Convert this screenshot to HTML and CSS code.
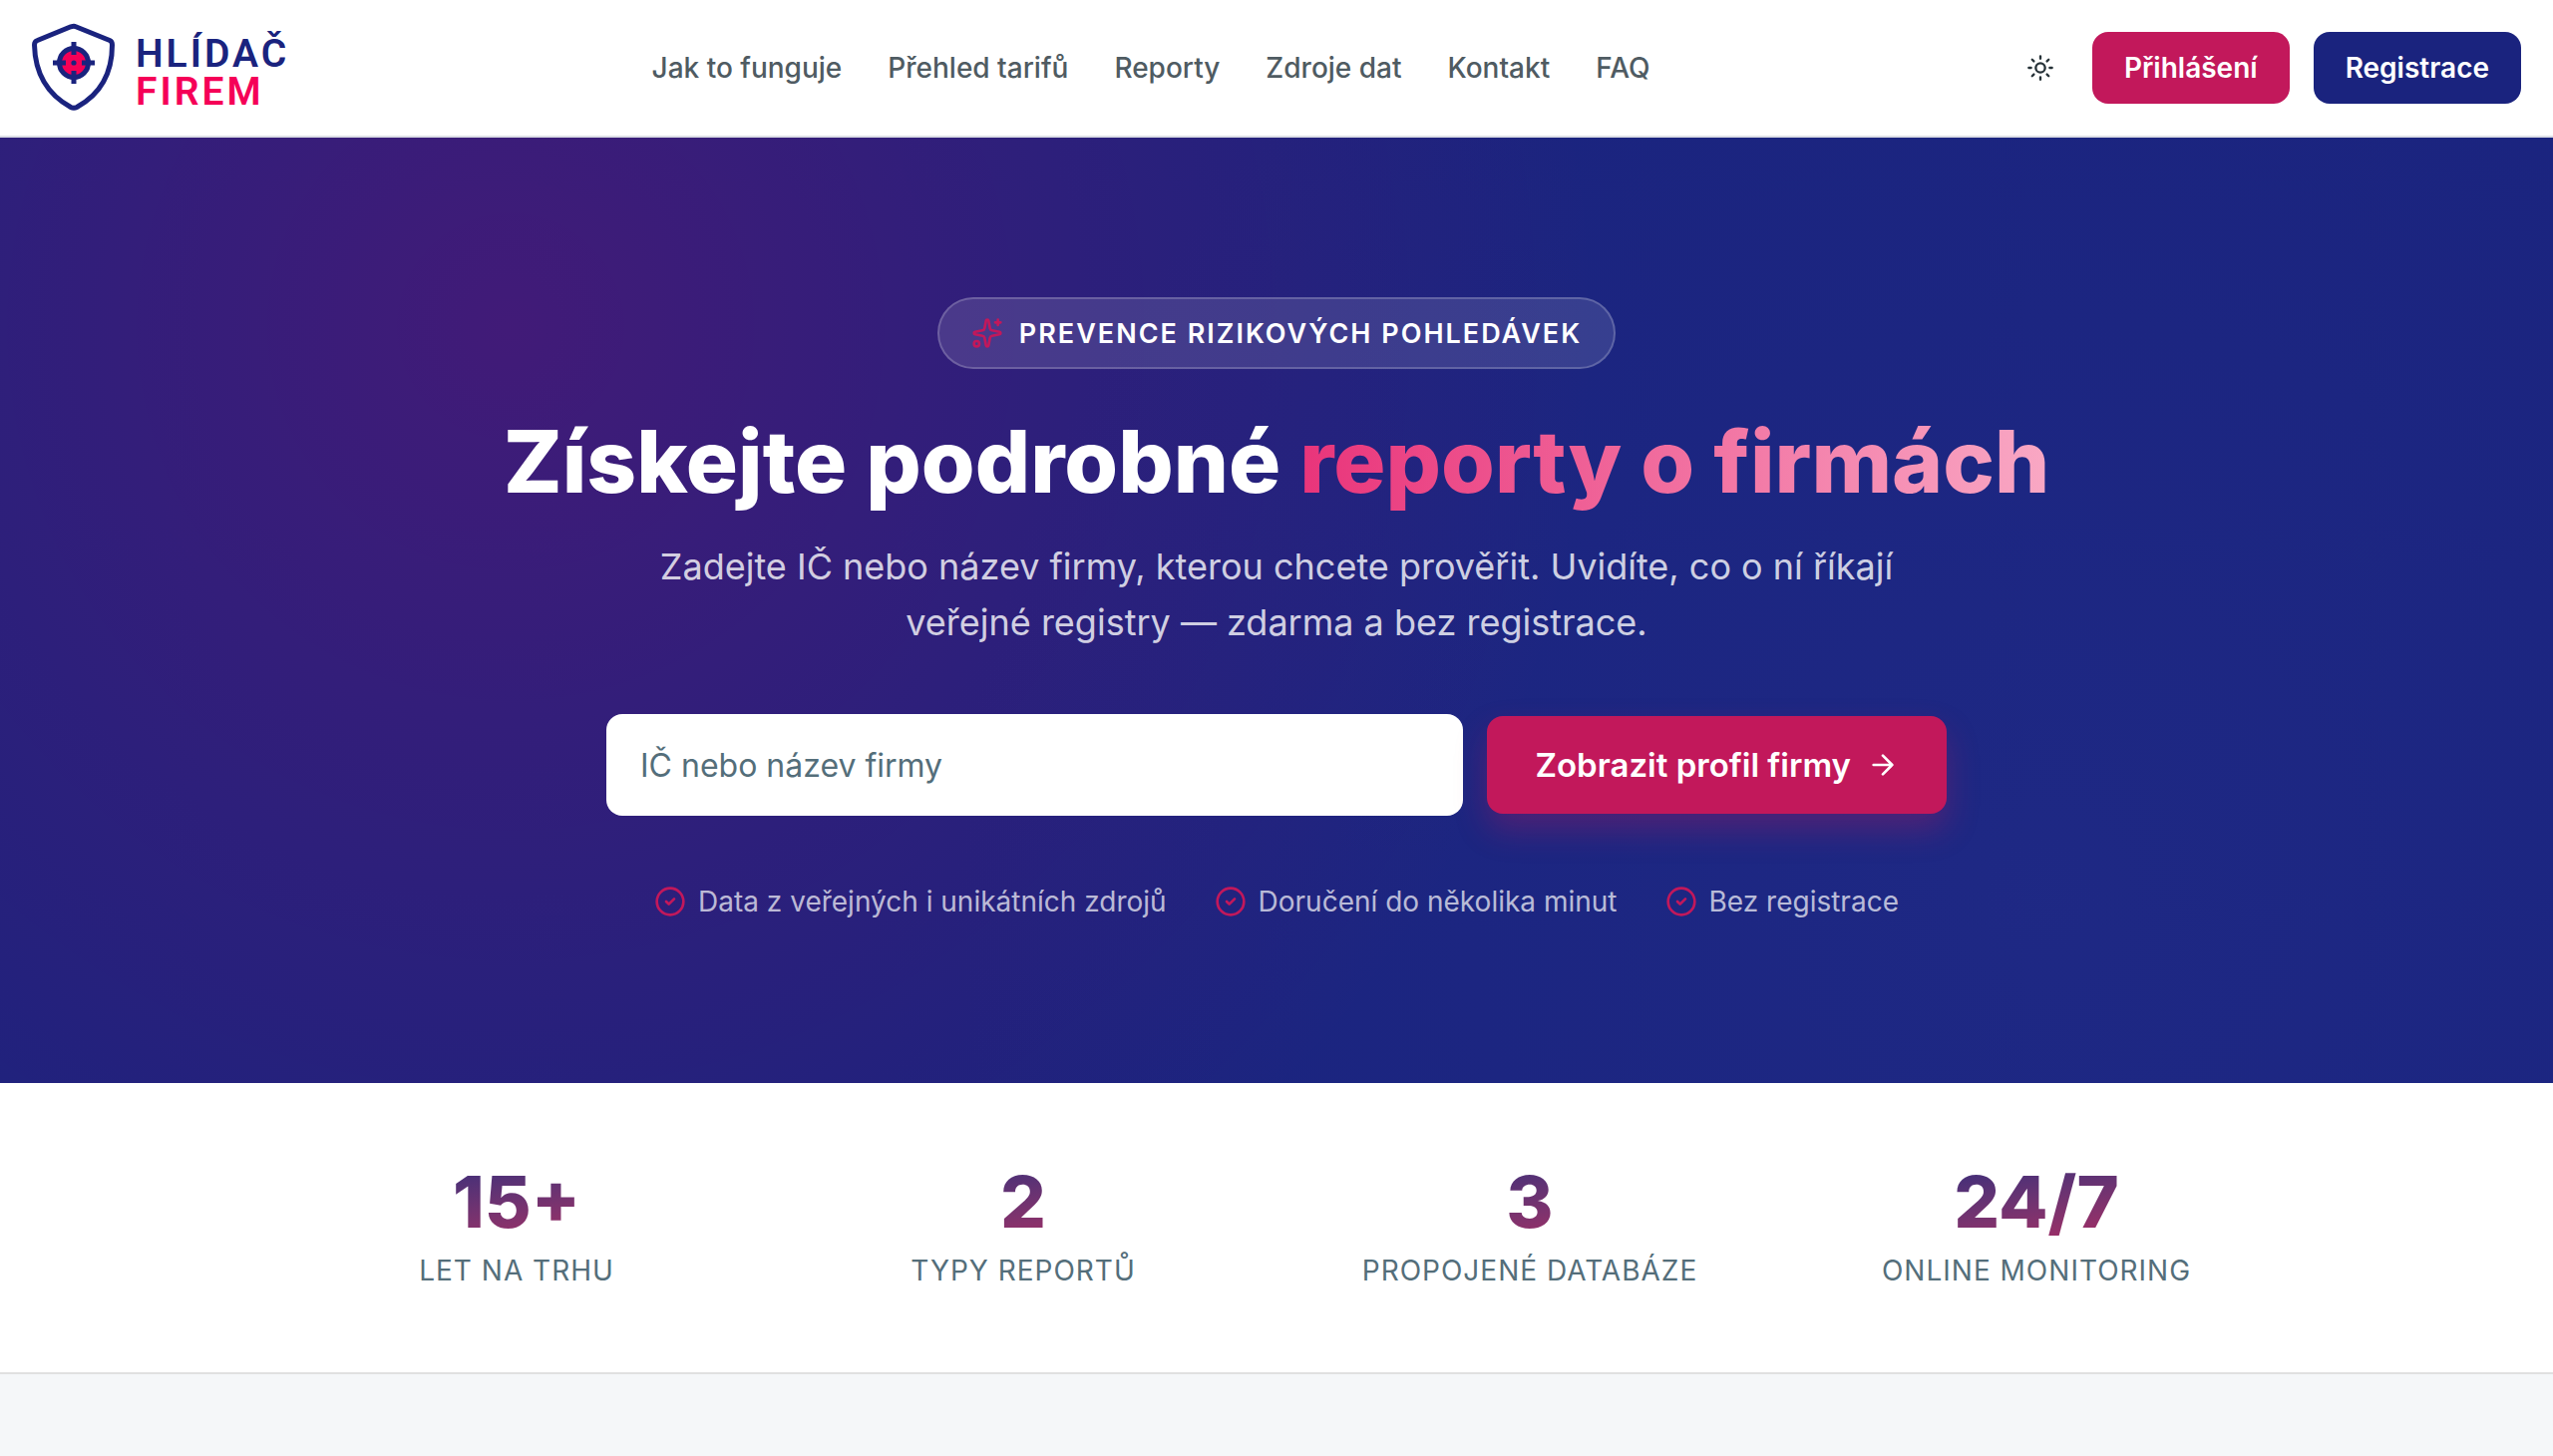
FILE: index.html
```html
<!DOCTYPE html>
<html lang="cs">
<head>
    <meta charset="utf-8" />
    <meta name="viewport" content="width=device-width, initial-scale=1" />
    <title>Hlídač firem</title>
    <link rel="stylesheet" href="styles.css">
</head>
<body>
    <header class="header">
        <a class="logo" href="#">
            <svg class="logo-mark" viewBox="0 0 84 90" fill="none" aria-hidden="true">
                <path d="M42 3.200 Q43 3.200 44 3.800 L78 17.500 Q80.500 18.600 80.500 22 Q80.500 65 45 84.500 Q42 86 39 84.500 Q3.500 65 2.500 22 Q2.500 18.600 5.500 17.500 L39 3.800 Q41 3.200 42 3.200 Z" stroke="#1a237e" stroke-width="5" stroke-linejoin="round" />
                <circle cx="42" cy="40" r="14.500" fill="#f50057" stroke="#1a237e" stroke-width="5" />
                <path d="M42 19V32M42 48V61M21 40H34M50 40H63" stroke="#1a237e" stroke-width="5" />
                <circle cx="42" cy="40" r="2.600" fill="#1a237e" />
            </svg>
            <span class="logo-text">
                <span>HLÍDAČ</span>
                <span class="logo-accent">FIREM</span>
            </span>
        </a>
        <nav class="nav">
            <a href="#">Jak to funguje</a>
            <a href="#">Přehled tarifů</a>
            <a href="#">Reporty</a>
            <a href="#">Zdroje dat</a>
            <a href="#">Kontakt</a>
            <a href="#">FAQ</a>
        </nav>
        <div class="actions">
            <button class="theme-toggle" type="button" aria-label="Přepnout motiv">
                <svg viewBox="0 0 24 24" fill="none" stroke="currentColor" stroke-width="2" stroke-linecap="round" stroke-linejoin="round">
                    <circle cx="12" cy="12" r="4" />
                    <path d="M12 2v2M12 20v2M4.930 4.930l1.410 1.410M17.660 17.660l1.410 1.410M2 12h2M20 12h2M6.340 17.660l-1.410 1.410M19.070 4.930l-1.410 1.410" />
                </svg>
            </button>
            <button class="btn btn-login" type="button">Přihlášení</button>
            <button class="btn btn-register" type="button">Registrace</button>
        </div>
    </header>

    <main>
        <section class="hero">
            <div class="badge">
                <svg viewBox="0 0 24 24" fill="none" stroke="currentColor" stroke-width="2" stroke-linecap="round" stroke-linejoin="round" aria-hidden="true">
                    <path d="M11.017 2.814a1 1 0 0 1 1.966 0l1.051 5.558a2 2 0 0 0 1.594 1.594l5.558 1.051a1 1 0 0 1 0 1.966l-5.558 1.051a2 2 0 0 0-1.594 1.594l-1.051 5.558a1 1 0 0 1-1.966 0l-1.051-5.558a2 2 0 0 0-1.594-1.594l-5.558-1.051a1 1 0 0 1 0-1.966l5.558-1.051a2 2 0 0 0 1.594-1.594z" />
                    <path d="M20 2v4M22 4h-4" />
                    <circle cx="4" cy="20" r="2" />
                </svg>
                PREVENCE RIZIKOVÝCH POHLEDÁVEK
            </div>
            <h1>Získejte podrobné <span class="highlight">reporty o firmách</span></h1>
            <p class="lead">Zadejte IČ nebo název firmy, kterou chcete prověřit. Uvidíte, co o ní říkají veřejné registry — zdarma a bez registrace.</p>
            <form class="search">
                <input class="search-input" type="text" placeholder="IČ nebo název firmy" aria-label="IČ nebo název firmy">
                <button class="search-btn" type="button">
                    Zobrazit profil firmy
                    <svg viewBox="0 0 24 24" fill="none" stroke="currentColor" stroke-width="2" stroke-linecap="round" stroke-linejoin="round" aria-hidden="true">
                        <path d="M5 12h14M12 5l7 7-7 7" />
                    </svg>
                </button>
            </form>
            <ul class="benefits">
                <li>
                    <svg viewBox="0 0 24 24" fill="none" stroke="currentColor" stroke-width="2" stroke-linecap="round" stroke-linejoin="round" aria-hidden="true">
                        <circle cx="12" cy="12" r="10" />
                        <path d="M9 12l2 2 4-4" />
                    </svg>
                    Data z veřejných i unikátních zdrojů
                </li>
                <li>
                    <svg viewBox="0 0 24 24" fill="none" stroke="currentColor" stroke-width="2" stroke-linecap="round" stroke-linejoin="round" aria-hidden="true">
                        <circle cx="12" cy="12" r="10" />
                        <path d="M9 12l2 2 4-4" />
                    </svg>
                    Doručení do několika minut
                </li>
                <li>
                    <svg viewBox="0 0 24 24" fill="none" stroke="currentColor" stroke-width="2" stroke-linecap="round" stroke-linejoin="round" aria-hidden="true">
                        <circle cx="12" cy="12" r="10" />
                        <path d="M9 12l2 2 4-4" />
                    </svg>
                    Bez registrace
                </li>
            </ul>
        </section>

        <section class="stats">
            <div class="stats-grid">
                <div class="stat">
                    <div class="stat-value">15+</div>
                    <div class="stat-label">LET NA TRHU</div>
                </div>
                <div class="stat">
                    <div class="stat-value">2</div>
                    <div class="stat-label">TYPY REPORTŮ</div>
                </div>
                <div class="stat">
                    <div class="stat-value">3</div>
                    <div class="stat-label">PROPOJENÉ DATABÁZE</div>
                </div>
                <div class="stat">
                    <div class="stat-value">24/7</div>
                    <div class="stat-label">ONLINE MONITORING</div>
                </div>
            </div>
        </section>
    </main>
</body>
</html>
```

FILE: styles.css
```css
* {
    box-sizing: border-box;
}

body {
    margin: 0;
    min-height: 100vh;
    background: #f5f7f9;
    color: #263238;
    font-family: Inter, "Liberation Sans", sans-serif;
    font-size: 28px;
}

button,
input {
    font-family: inherit;
}

a {
    color: inherit;
    text-decoration: none;
}

.header {
    display: flex;
    align-items: center;
    justify-content: space-between;
    gap: 32px;
    padding: 23px 32px;
    background: #fff;
    border-bottom: 2px solid #dcdee6;
}

.logo {
    display: flex;
    align-items: center;
    gap: 20px;
}

.logo-mark {
    width: 84px;
    height: 90px;
}

.logo-text {
    display: flex;
    flex-direction: column;
    padding-top: 10px;
    color: #1a237e;
    font-family: Roboto, sans-serif;
    font-size: 39px;
    font-weight: 600;
    line-height: 38px;
    letter-spacing: 3px;
}

.logo-accent {
    color: #f50057;
}

.nav {
    display: flex;
    gap: 46px;
    color: #4f5b62;
    font-size: 28px;
    font-weight: 500;
}

.actions {
    display: flex;
    align-items: center;
    gap: 24px;
}

.theme-toggle {
    display: flex;
    padding: 14px;
    border: none;
    background: none;
    color: #263238;
}

.theme-toggle svg {
    width: 28px;
    height: 28px;
}

.btn {
    height: 72px;
    padding: 0 32px;
    border: none;
    border-radius: 16px;
    color: #fff;
    font-size: 28px;
    font-weight: 600;
}

.btn-login {
    background: #c2185b;
}

.btn-register {
    background: #1a237e;
}

.hero {
    display: flex;
    flex-direction: column;
    align-items: center;
    padding: 160px 48px;
    background:
        radial-gradient(circle at 20% 20%, rgba(190, 0, 100, 0.24), transparent 50%),
        radial-gradient(circle at 80% 80%, rgba(40, 53, 147, 0.3), transparent 50%),
        #1a237e;
    color: #fff;
    text-align: center;
}

.badge {
    display: flex;
    align-items: center;
    gap: 16px;
    height: 72px;
    padding: 0 32px;
    border: 2px solid rgba(255, 255, 255, 0.2);
    border-radius: 36px;
    background: rgba(255, 255, 255, 0.12);
    font-size: 27px;
    font-weight: 600;
    letter-spacing: 2px;
}

.badge svg {
    width: 32px;
    height: 32px;
    color: #c2185b;
}

h1 {
    margin: 40px 0 24px;
    font-size: 87px;
    font-weight: 800;
    line-height: 106px;
}

.highlight {
    background: linear-gradient(to right, #e9347a, #f9a8c4);
    -webkit-background-clip: text;
    background-clip: text;
    color: transparent;
}

.lead {
    max-width: 1280px;
    margin: 0 0 64px;
    color: rgba(255, 255, 255, 0.8);
    font-size: 36px;
    line-height: 56px;
}

.search {
    display: flex;
    align-items: center;
    gap: 24px;
    width: 100%;
    max-width: 1344px;
}

.search-input {
    flex: 1;
    min-width: 0;
    height: 102px;
    padding: 0 34px;
    border: none;
    border-radius: 16px;
    background: #fff;
    font-size: 32px;
}

.search-input::placeholder {
    color: #546e7a;
}

.search-btn {
    display: flex;
    align-items: center;
    gap: 16px;
    height: 98px;
    padding: 0 48px;
    border: none;
    border-radius: 16px;
    background: #c2185b;
    box-shadow: 0 16px 32px rgba(194, 24, 91, 0.3);
    color: #fff;
    font-size: 33px;
    font-weight: 600;
}

.search-btn svg {
    width: 32px;
    height: 32px;
}

.benefits {
    display: flex;
    flex-wrap: wrap;
    justify-content: center;
    gap: 16px 48px;
    margin: 64px 0 0;
    padding: 0;
    list-style: none;
    color: rgba(255, 255, 255, 0.7);
    font-size: 28px;
    line-height: 44px;
}

.benefits li {
    display: flex;
    align-items: center;
    gap: 12px;
}

.benefits svg {
    width: 32px;
    height: 32px;
    color: #c2185b;
}

.stats {
    padding: 80px 48px;
    background: #fff;
    border-bottom: 2px solid #e0e0e0;
}

.stats-grid {
    display: grid;
    grid-template-columns: repeat(4, 1fr);
    gap: 64px;
    max-width: 1968px;
    margin: 0 auto;
    text-align: center;
}

.stat-value {
    background: linear-gradient(to bottom right in oklab, #1a237e, #c2185b);
    -webkit-background-clip: text;
    background-clip: text;
    color: transparent;
    font-size: 72px;
    font-weight: 800;
    line-height: 78px;
}

.stat-label {
    margin-top: 8px;
    color: #546e7a;
    font-size: 28px;
    line-height: 44px;
    letter-spacing: 1px;
}
```
